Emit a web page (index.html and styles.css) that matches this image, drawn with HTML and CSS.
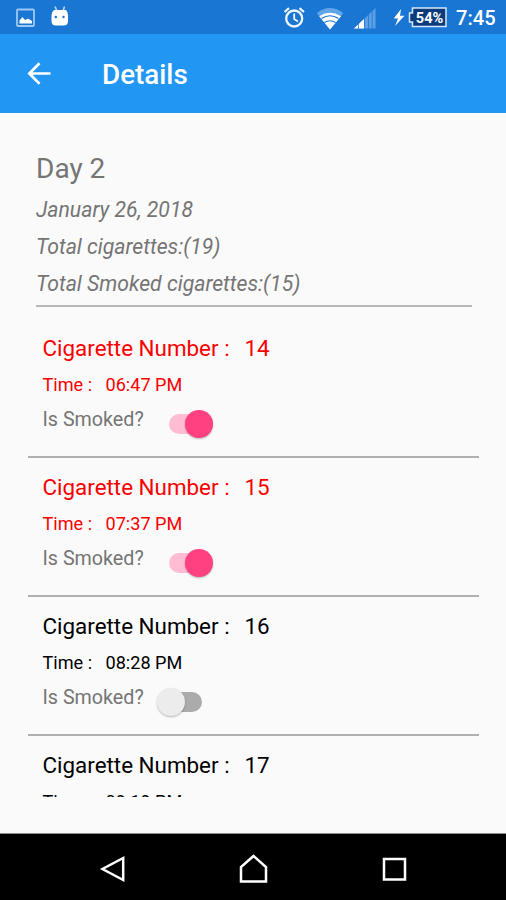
FILE: index.html
```html
<!DOCTYPE html>
<html lang="en">
<head>
<meta charset="utf-8">
<title>Details</title>
<link rel="stylesheet" href="styles.css">
</head>
<body>
<div class="phone">
  <div class="status">
    <svg class="notifications" width="72" height="34" viewBox="0 0 72 34">
      <rect x="17" y="9.5" width="17" height="16.5" rx="1" fill="none" stroke="#9dc8f3" stroke-width="1.8"/>
      <path d="M19.5 23.500V20.500L22.500 17L25 20L28 18.500L32 21V23.500Z" fill="#fff"/>
      <path d="M55 6.500L57 11M64.500 6.500L63 11" stroke="#b5d5f5" stroke-width="1.600"/>
      <path d="M54 10H66Q68 12 68 15V21Q68 25.500 63.500 25.500H56Q51.500 25.500 51.500 21V15Q51.500 12 54 10Z" fill="#fff"/>
      <circle cx="55.800" cy="17" r="1.200" fill="#1976d2"/><circle cx="63.500" cy="17" r="1.200" fill="#1976d2"/>
    </svg>
    <svg class="system" width="168" height="34" viewBox="282 0 168 34">
      <g fill="none" stroke="#edf6ff">
        <circle cx="294.200" cy="18.500" r="8" stroke-width="2.300"/>
        <path d="M294.200 13.500V19L298 21.500" stroke-width="1.800"/>
        <path d="M284.500 12L289 8.200M304 12L299.500 8.200" stroke-width="2.200"/>
      </g>
      <path d="M316.800 13.200Q330 3 343.300 13.200L330 29.500Z" fill="#5fa5e8"/>
      <path d="M319.200 16.200Q330 9.500 341 16.200L330 29.500Z" fill="#fff"/>
      <path d="M321.500 18.500Q330 13 338.500 18.500M324.300 22.500Q330 19 335.700 22.500" fill="none" stroke="#1976d2" stroke-width="1.100"/>
      <path d="M354 28.500L375.500 8V28.500Z" fill="#5b9fe4"/>
      <path d="M354 28.500L364 19V28.500Z" fill="#fff"/>
      <path d="M364.500 8V29M368.500 8V29M372.200 8V29M358.500 20V29" stroke="#1976d2" stroke-width=".7"/>
      <path d="M401 9L393.800 18.600H398L395 26L404.500 15.800H400Z" fill="#fff"/>
      <path d="M412.500 8H446V26.500H412.500V22H409.500V13H412.500Z" fill="#0c3b7c" stroke="#d4e8fc" stroke-width="1.500"/>
      <text class="charge" x="429.500" y="22.600" text-anchor="middle">54%</text>
    </svg>
    <span class="clock">7:45</span>
  </div>
  <header class="appbar">
    <svg width="26" height="26" viewBox="0 0 26 26"><path d="M24.500 12.500H3.500M13.500 2.300L3.300 12.500L13.500 22.700" fill="none" stroke="#fff" stroke-width="2.700"/></svg>
    <h1>Details</h1>
  </header>
  <main class="content">
    <section class="summary">
      <h2>Day 2</h2>
      <p>January 26, 2018</p>
      <p>Total cigarettes:(19)</p>
      <p>Total Smoked cigarettes:(15)</p>
    </section>
    <div class="list">
      <article class="entry smoked">
        <div class="number"><span>Cigarette Number :</span><span>14</span></div>
        <div class="time"><span>Time :</span><span>06:47 PM</span></div>
        <div class="question"><span>Is Smoked?</span><i class="switch"></i></div>
      </article>
      <article class="entry smoked">
        <div class="number"><span>Cigarette Number :</span><span>15</span></div>
        <div class="time"><span>Time :</span><span>07:37 PM</span></div>
        <div class="question"><span>Is Smoked?</span><i class="switch"></i></div>
      </article>
      <article class="entry">
        <div class="number"><span>Cigarette Number :</span><span>16</span></div>
        <div class="time"><span>Time :</span><span>08:28 PM</span></div>
        <div class="question"><span>Is Smoked?</span><i class="switch"></i></div>
      </article>
      <article class="entry">
        <div class="number"><span>Cigarette Number :</span><span>17</span></div>
        <div class="time"><span>Time :</span><span>09:19 PM</span></div>
      </article>
    </div>
  </main>
  <nav class="navbar">
    <svg width="28" height="32" viewBox="0 0 28 32"><path d="M24.200 4V26L3.500 15Z"/></svg>
    <svg width="32" height="32" viewBox="0 0 32 32"><path d="M3 27.500V13L15.500 2L28 13V27.500Z"/></svg>
    <svg width="28" height="32" viewBox="0 0 28 32"><path d="M4 5H25V25.500H4Z"/></svg>
  </nav>
</div>
</body>
</html>
```

FILE: styles.css
```css
* { box-sizing: border-box; }
body { margin: 0; font-family: Roboto, sans-serif; color: #000; }
h1, h2, p { margin: 0; }
.phone { width: 506px; height: 900px; display: flex; flex-direction: column; background: #fafafa; overflow: hidden; }
.status { height: 34px; flex: none; display: flex; background: #1976d2; color: #fff; }
.status svg { flex: none; display: block; }
.system { margin-left: 210px; }
.charge { font: 700 14.5px Roboto, sans-serif; fill: #fff; }
.clock { margin-left: 6px; font-size: 20.2px; line-height: 36px; font-weight: 500; white-space: nowrap; }
.appbar { height: 79px; flex: none; display: flex; align-items: center; padding-left: 26px; background: #2196f3; color: #fff; }
.appbar svg { flex: none; }
.appbar h1 { margin-left: 50px; font-size: 27.8px; line-height: 32px; font-weight: 500; padding-top: 3px; }
.content { height: 684px; flex: none; padding: 39px 27px 0 28px; overflow: hidden; }
.summary { height: 155px; margin: 0 7px 0 8px; border-bottom: 2px solid #b8b8b8; color: #757575; }
.summary h2 { font-size: 28px; line-height: 34px; font-weight: 400; margin-bottom: 5px; }
.summary p { font-size: 21.2px; line-height: 37px; font-style: italic; white-space: nowrap; }
.list { padding-top: 12px; }
.entry { height: 139px; padding: 11px 0 0 14.5px; }
.entry:not(:last-child) { border-bottom: 2px solid #b0b0b0; }
.number, .time, .question { display: flex; white-space: nowrap; }
.number { height: 37px; font-size: 22.4px; line-height: 36px; }
.number span:first-child { width: 202px; }
.time { height: 35px; font-size: 18.1px; line-height: 36px; }
.time span:first-child { width: 63px; }
.smoked .number, .smoked .time { color: #fa0000; }
.question { height: 36px; font-size: 19.7px; line-height: 36px; color: #757575; }
.question span { width: 114px; }
.switch { position: relative; width: 45px; height: 20px; margin-top: 11.5px; border-radius: 10px; background: linear-gradient(90deg, transparent 0 11px, #ababab 11px); }
.switch::before { content: ""; position: absolute; left: 0; top: -4px; width: 28px; height: 28px; border-radius: 50%; background: #ececec; box-shadow: 0 1px 2px #00000045; }
.smoked .switch { width: 34px; margin-left: 12px; background: #ffbdd3; }
.smoked .switch::before { left: 16px; background: #ff4081; }
.navbar { height: 67px; flex: none; margin-top: auto; display: flex; justify-content: space-between; padding: 20px 98px 0 99px; background: #000; border-top: 1px solid #8a8a8a; }
.navbar svg { fill: none; stroke: #fff; stroke-width: 2.5; }
```
